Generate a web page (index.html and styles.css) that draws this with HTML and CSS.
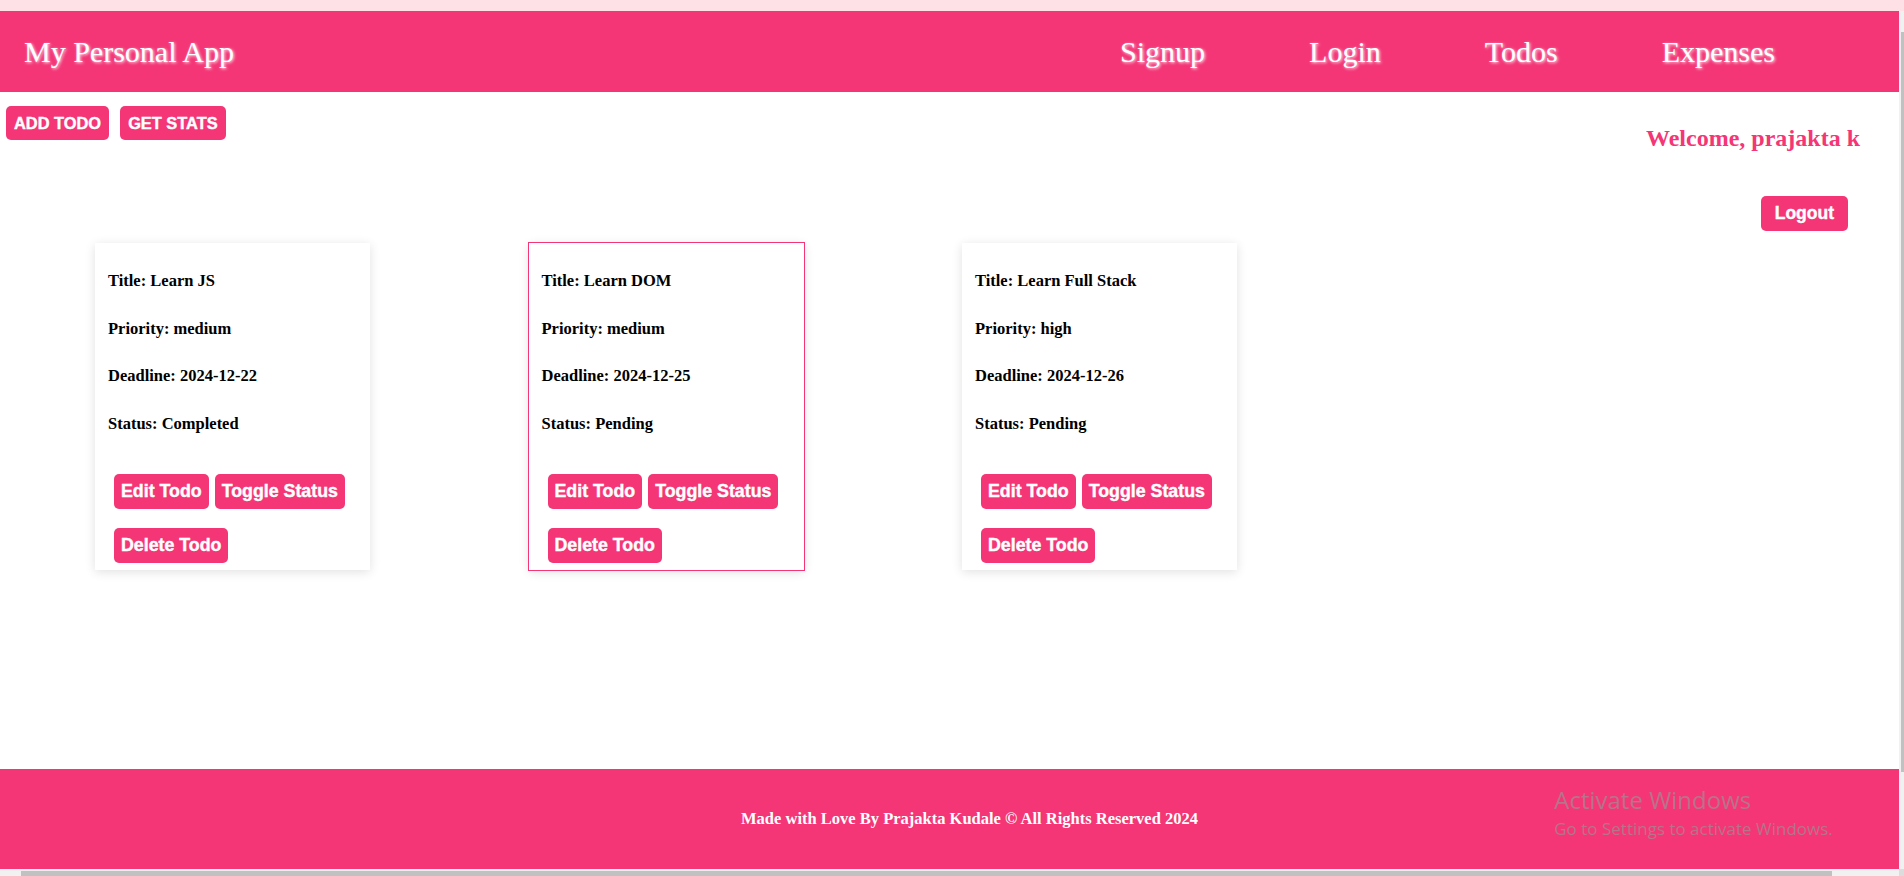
FILE: index.html
```html
<!DOCTYPE html>
<html lang="en">
<head>
<meta charset="utf-8">
<title>My Personal App</title>
<link rel="stylesheet" href="styles.css">
</head>
<body>
<div class="frame">
  <div class="topstrip"></div>
  <div class="app">
    <header class="header">
      <div class="brand">My Personal App</div>
      <nav class="nav">
        <a class="nav-link">Signup</a>
        <a class="nav-link">Login</a>
        <a class="nav-link">Todos</a>
        <a class="nav-link">Expenses</a>
      </nav>
    </header>
    <main class="main">
      <div class="toolbar">
        <div class="tools">
          <button class="btn btn-tool">ADD TODO</button>
          <button class="btn btn-tool">GET STATS</button>
        </div>
        <div class="user">
          <h2 class="welcome">Welcome, prajakta k</h2>
          <button class="btn btn-logout">Logout</button>
        </div>
      </div>
      <div class="cards">
        <div class="card">
          <div class="card-body">
            <p class="card-line">Title: Learn JS</p>
            <p class="card-line">Priority: medium</p>
            <p class="card-line">Deadline: 2024-12-22</p>
            <p class="card-line">Status: Completed</p>
          </div>
          <div class="card-actions">
            <button class="btn btn-card">Edit Todo</button>
            <button class="btn btn-card">Toggle Status</button>
            <button class="btn btn-card">Delete Todo</button>
          </div>
        </div>
        <div class="card card-active">
          <div class="card-body">
            <p class="card-line">Title: Learn DOM</p>
            <p class="card-line">Priority: medium</p>
            <p class="card-line">Deadline: 2024-12-25</p>
            <p class="card-line">Status: Pending</p>
          </div>
          <div class="card-actions">
            <button class="btn btn-card">Edit Todo</button>
            <button class="btn btn-card">Toggle Status</button>
            <button class="btn btn-card">Delete Todo</button>
          </div>
        </div>
        <div class="card">
          <div class="card-body">
            <p class="card-line">Title: Learn Full Stack</p>
            <p class="card-line">Priority: high</p>
            <p class="card-line">Deadline: 2024-12-26</p>
            <p class="card-line">Status: Pending</p>
          </div>
          <div class="card-actions">
            <button class="btn btn-card">Edit Todo</button>
            <button class="btn btn-card">Toggle Status</button>
            <button class="btn btn-card">Delete Todo</button>
          </div>
        </div>
      </div>
    </main>
    <footer class="footer">
      <p class="footer-text">Made with Love By Prajakta Kudale © All Rights Reserved 2024</p>
    </footer>
  </div>
  <div class="vscroll"><div class="vthumb"></div></div>
  <div class="hscroll"><div class="hthumb"></div></div>
  <div class="corner"></div>
</div>
<div class="activate">
  <div class="activate-title">Activate Windows</div>
  <div class="activate-sub">Go to Settings to activate Windows.</div>
</div>
</body>
</html>
```
FILE: styles.css
```css
* {
  box-sizing: border-box;
}

html, body {
  margin: 0;
  padding: 0;
  background: #ffffff;
}

body {
  font-family: "Liberation Serif", "Times New Roman", serif;
  overflow: hidden;
}

.frame {
  display: grid;
  grid-template-columns: 1899px 5px;
  grid-template-rows: 11px 858px 7px;
  width: 1904px;
  height: 876px;
}

.topstrip {
  grid-column: 1 / 3;
  background: #fde1e6;
}

.app {
  display: flex;
  flex-direction: column;
  overflow: hidden;
  background: #ffffff;
}

.header {
  height: 81px;
  flex: 0 0 81px;
  background: #f43676;
  display: flex;
  align-items: center;
  justify-content: space-between;
  padding: 0 124px 0 24px;
}

.brand,
.nav-link {
  color: #ffffff;
  font-size: 30px;
  font-family: "Liberation Serif", "Times New Roman", serif;
  text-shadow: 1px 1px 3px rgba(255, 255, 255, 0.85);
}

.nav {
  display: flex;
  gap: 104px;
}

.nav-link {
  text-decoration: none;
}

.main {
  flex: 1;
}

.toolbar {
  display: flex;
  justify-content: space-between;
  align-items: flex-start;
  padding: 14px 39px 12px 6px;
}

.tools {
  display: flex;
  gap: 11px;
}

.btn {
  background: #f43676;
  color: #ffffff;
  border: none;
  border-radius: 5px;
  font-family: "Liberation Sans", Arial, sans-serif;
  font-weight: 700;
  -webkit-text-stroke: 0.4px #ffffff;
  cursor: pointer;
  display: inline-flex;
  align-items: center;
  justify-content: center;
}

.btn-tool {
  height: 34px;
  font-size: 16.4px;
  padding: 0 8px;
}

.user {
  display: flex;
  flex-direction: column;
  align-items: flex-end;
}

.welcome {
  margin: 18px 0 0;
  font-size: 24px;
  line-height: 28px;
  font-weight: 700;
  color: #f43676;
}

.btn-logout {
  margin: 44px 12px 0 0;
  height: 35px;
  font-size: 17.5px;
  padding: 0 14px;
}

.cards {
  display: flex;
  align-items: flex-start;
  gap: 158.5px;
  padding-left: 95px;
}

.card {
  width: 275px;
  background: #ffffff;
  padding: 28px 13px 7px;
  box-shadow: 0 2px 10px rgba(0, 0, 0, 0.12);
}

.card-active {
  outline: 1px solid #f43676;
}

.card-body {
  display: flex;
  flex-direction: column;
  gap: 28.67px;
}

.card-line {
  margin: 0;
  font-family: "Liberation Serif", "Times New Roman", serif;
  font-weight: 700;
  font-size: 16.5px;
  line-height: 19px;
  color: #000000;
}

.card-actions {
  display: flex;
  flex-wrap: wrap;
  gap: 19px 6px;
  margin: 41px 0 0 6px;
}

.btn-card {
  height: 35px;
  font-size: 17.8px;
  padding: 0 7px;
}

.footer {
  height: 100px;
  flex: 0 0 100px;
  background: #f43676;
  display: flex;
  align-items: center;
  justify-content: center;
  padding-left: 40px;
}

.footer-text {
  margin: 0;
  color: #ffffff;
  font-weight: 700;
  font-size: 16.5px;
  font-family: "Liberation Serif", "Times New Roman", serif;
}

.vscroll {
  background: #f1f1f1;
  padding: 21px 0 0 2px;
}

.vthumb {
  height: 740px;
  background: #c1c1c1;
}

.hscroll {
  background: #f1f1f1;
  padding: 2px 0 0 21px;
}

.hthumb {
  width: 1811px;
  height: 5px;
  background: #c1c1c1;
}

.corner {
  background: #dcdcdc;
}

.activate {
  position: fixed;
  left: 1554px;
  top: 785px;
  color: rgba(150, 150, 150, 0.65);
  font-family: "Open Sans", "Noto Sans", sans-serif;
  pointer-events: none;
}

.activate-title {
  font-size: 24px;
  line-height: 30px;
}

.activate-sub {
  font-size: 17px;
  line-height: 20px;
  margin-top: 4px;
}
```
